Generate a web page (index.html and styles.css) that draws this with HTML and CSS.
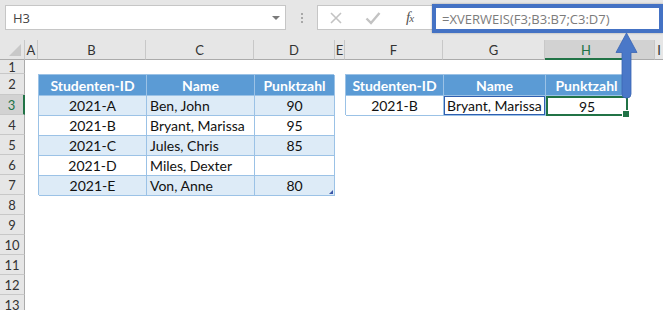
FILE: index.html
```html
<!DOCTYPE html>
<html lang="de">
<head>
  <meta charset="UTF-8" />
  <title>XVERWEIS</title>
  <link rel="stylesheet" href="styles.css">
</head>
<body>

<div class="toolbar">
  <div class="namebox">
    <span>H3</span>
    <span class="caret"></span>
  </div>
  <div class="grip"><i></i><i></i><i></i></div>
  <div class="fbar">
    <svg class="fbtn" width="14" height="14" viewBox="0 0 14 14">
      <path d="M2 2 L12 12 M12 2 L2 12" stroke="#c3c3c3" stroke-width="1.6" fill="none" />
    </svg>
    <svg class="fbtn" width="16" height="14" viewBox="0 0 16 14">
      <path d="M1.5 7.5 L6 12 L14.5 2" stroke="#c3c3c3" stroke-width="2.4" fill="none" />
    </svg>
    <span class="fx">f<small>x</small></span>
    <div class="formula">=XVERWEIS(F3;B3:B7;C3:D7)</div>
  </div>
</div>

<div class="sheet">
  <div class="corner"><span></span></div>
  <div class="colhead">A</div>
  <div class="colhead">B</div>
  <div class="colhead">C</div>
  <div class="colhead">D</div>
  <div class="colhead">E</div>
  <div class="colhead">F</div>
  <div class="colhead">G</div>
  <div class="colhead active">H</div>
  <div class="colhead dim"></div>
  <div class="colhead last">I</div>

  <div class="rowhead">1</div>
  <div class="rowhead">2</div>
  <div class="rowhead active">3</div>
  <div class="rowhead">4</div>
  <div class="rowhead">5</div>
  <div class="rowhead">6</div>
  <div class="rowhead">7</div>
  <div class="rowhead">8</div>
  <div class="rowhead">9</div>
  <div class="rowhead">10</div>
  <div class="rowhead">11</div>
  <div class="rowhead">12</div>
  <div class="rowhead">13</div>

  <div class="xtable source">
    <div class="th">Studenten-ID</div>
    <div class="th">Name</div>
    <div class="th">Punktzahl</div>

    <div class="td band">2021-A</div>
    <div class="td band left">Ben, John</div>
    <div class="td band">90</div>

    <div class="td">2021-B</div>
    <div class="td left">Bryant, Marissa</div>
    <div class="td">95</div>

    <div class="td band">2021-C</div>
    <div class="td band left">Jules, Chris</div>
    <div class="td band">85</div>

    <div class="td">2021-D</div>
    <div class="td left">Miles, Dexter</div>
    <div class="td"></div>

    <div class="td band">2021-E</div>
    <div class="td band left">Von, Anne</div>
    <div class="td band handle">80</div>
  </div>

  <div class="xtable lookup">
    <div class="th">Studenten-ID</div>
    <div class="th">Name</div>
    <div class="th">Punktzahl</div>

    <div class="td">2021-B</div>
    <div class="td left ref">Bryant, Marissa</div>
    <div class="td selected">95</div>
  </div>
</div>

<svg class="arrow" width="26" height="70" viewBox="0 0 26 70">
  <path d="M12.5 2 L23 21.5 L17 21.5 L17 63 Q17 67 13 67 L12 67 Q8 67 8 63 L8 21.5 L2 21.5 Z"
        fill="#4a78c8" stroke="#3a64b2" stroke-width="0.8" />
</svg>

</body>
</html>
```

FILE: styles.css
```css
* {
  box-sizing: border-box;
}

body {
  margin: 0;
  width: 663px;
  height: 310px;
  overflow: hidden;
  background: #fff;
  font-family: 'Lato', sans-serif;
  position: relative;
}

.toolbar {
  height: 40px;
  background: #e6e6e6;
  display: flex;
  align-items: flex-start;
  padding: 5px 0 0 5px;
}

.namebox {
  width: 281px;
  height: 25px;
  background: #fff;
  border: 1px solid #c6c6c6;
  display: flex;
  align-items: center;
  justify-content: space-between;
  padding: 0 5px 0 7px;
  font-family: 'Open Sans', sans-serif;
  font-size: 13px;
  color: #444;
}

.caret {
  width: 0;
  height: 0;
  border-left: 4px solid transparent;
  border-right: 4px solid transparent;
  border-top: 4px solid #7a7a7a;
}

.grip {
  width: 31px;
  height: 25px;
  display: flex;
  flex-direction: column;
  align-items: center;
  justify-content: center;
  gap: 2px;
}

.grip i {
  width: 2px;
  height: 2px;
  background: #a8a8a8;
}

.fbar {
  flex: 1;
  height: 25px;
  background: #fff;
  border: 1px solid #c6c6c6;
  border-right: none;
  display: flex;
  align-items: center;
  padding-left: 11px;
  position: relative;
}

.fbtn {
  margin-right: 22px;
}

.fbtn + .fbtn {
  margin-right: 25px;
}

.fx {
  font-family: 'Liberation Serif', serif;
  font-style: italic;
  font-size: 15px;
  color: #555;
  letter-spacing: -1px;
}

.fx small {
  font-size: 11px;
}

.formula {
  position: absolute;
  left: 114px;
  top: -2px;
  right: 0;
  height: 29px;
  border: 4px solid #4472c4;
  background: #fff;
  display: flex;
  align-items: center;
  padding-left: 6px;
  font-family: 'Open Sans', sans-serif;
  font-size: 13px;
  color: #7b7b7b;
  box-shadow: 0 0 2px rgba(0, 0, 0, 0.3);
}

.sheet {
  display: grid;
  grid-template-columns: 25px 13px 108px 108px 81px 10px 98px 102px 82px 28px 1fr;
  grid-template-rows: 20px 14px 21px repeat(11, 20px);
}

.corner {
  background: #e6e6e6;
  border-right: 1px solid #c8c8c8;
  border-bottom: 1px solid #ababab;
  position: relative;
}

.corner span {
  position: absolute;
  right: 3px;
  bottom: 3px;
  width: 0;
  height: 0;
  border-left: 12px solid transparent;
  border-bottom: 12px solid #c8c8c8;
}

.colhead {
  background: #e6e6e6;
  border-right: 1px solid #c8c8c8;
  border-bottom: 1px solid #ababab;
  font-size: 13px;
  color: #333;
  display: flex;
  align-items: center;
  justify-content: center;
  padding-top: 1px;
}

.colhead.active {
  background: #d2d2d2;
  border-right: none;
  border-bottom: 2px solid #217346;
  color: #217346;
}

.colhead.dim {
  background: #d2d2d2;
}

.colhead.last {
  border-right: none;
}

.rowhead {
  grid-column: 1;
  background: #e6e6e6;
  border-right: 1px solid #ababab;
  border-bottom: 1px solid #c8c8c8;
  font-size: 13px;
  color: #333;
  display: flex;
  align-items: center;
  justify-content: center;
}

.rowhead.active {
  background: #d2d2d2;
  border-right: 2px solid #217346;
  color: #217346;
}

.xtable {
  display: grid;
  border-left: 1px solid #9bc2e6;
  border-top: 1px solid #9bc2e6;
  font-size: 14px;
  color: #111;
}

.source {
  grid-column: 3 / 6;
  grid-row: 3 / 9;
  grid-template-columns: 108px 108px 80px;
  grid-template-rows: 21px repeat(5, 20px);
  margin-right: 1px;
}

.lookup {
  grid-column: 7 / 10;
  grid-row: 3 / 5;
  grid-template-columns: 98px 102px 82px;
  grid-template-rows: 21px 20px;
}

.th,
.td {
  border-right: 1px solid #9bc2e6;
  border-bottom: 1px solid #9bc2e6;
  display: flex;
  align-items: center;
  justify-content: center;
  white-space: nowrap;
}

.th {
  background: #5b9bd5;
  color: #fff;
  font-weight: bold;
}

.td.band {
  background: #ddebf7;
}

.td.left {
  justify-content: flex-start;
  padding-left: 3px;
}

.td.ref {
  box-shadow: inset 0 0 0 1px #2f5fb0;
}

.td.selected {
  border: 2px solid #217346;
  position: relative;
}

.td.selected::after {
  content: '';
  position: absolute;
  right: -4px;
  bottom: -4px;
  width: 6px;
  height: 6px;
  background: #217346;
  border: 1px solid #fff;
}

.td.handle {
  position: relative;
}

.td.handle::after {
  content: '';
  position: absolute;
  right: 1px;
  bottom: 1px;
  width: 0;
  height: 0;
  border-left: 4px solid transparent;
  border-bottom: 4px solid #3a56a8;
}

.arrow {
  position: absolute;
  left: 614px;
  top: 31px;
}
```
